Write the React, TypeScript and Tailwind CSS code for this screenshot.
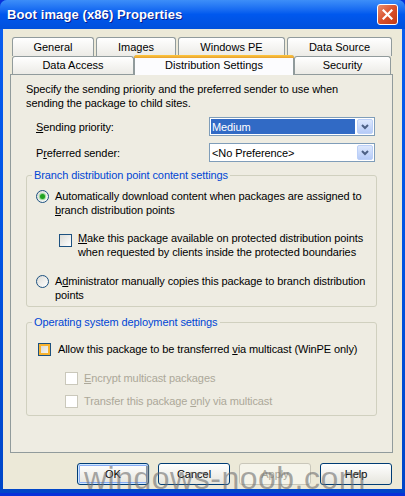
import React from 'react';

const font = "font-['Tahoma','Liberation_Sans',sans-serif]";

const Tab: React.FC<{ label: string; w: string }> = ({ label, w }) => (
  <div className={`${w} h-full flex items-center justify-center rounded-t-[3px] border border-b-0 border-[#919b9c] bg-gradient-to-b from-white to-[#ecebe6] text-[11px] text-black`}>
    {label}
  </div>
);

const Combo: React.FC<{ value: string; selected?: boolean }> = ({ value, selected }) => (
  <div className="w-[166px] h-[19px] border border-[#7f9db9] bg-white flex items-center p-[1px]">
    <div className={`flex-1 h-full flex items-center px-[1px] text-[11px] ${selected ? 'bg-[#316ac5] text-white' : 'text-black'}`}>{value}</div>
    <div className="w-[16px] h-full ml-[2px] rounded-[2px] border border-[#bcd0f8] bg-gradient-to-b from-[#dde8fd] to-[#b6cbf7] flex items-center justify-center">
      <svg width="8" height="6" viewBox="0 0 8 6"><path d="M1 1 L4 4 L7 1" fill="none" stroke="#4d6185" strokeWidth="2" /></svg>
    </div>
  </div>
);

const Radio: React.FC<{ checked?: boolean }> = ({ checked }) => (
  <div className="w-[13px] h-[13px] rounded-full border border-[#1c5180] bg-gradient-to-br from-[#dcdcd7] to-white flex items-center justify-center shrink-0">
    {checked && <div className="w-[5px] h-[5px] rounded-full bg-[#21a121] shadow-[0_0_1px_1px_rgba(80,200,80,0.6)]" />}
  </div>
);

const Check: React.FC<{ state?: 'normal' | 'hot' | 'disabled' }> = ({ state = 'normal' }) => {
  if (state === 'disabled') return <div className="w-[13px] h-[13px] border border-[#cac8bb] bg-white shrink-0" />;
  if (state === 'hot')
    return (
      <div className="w-[13px] h-[13px] border border-[#1c5180] bg-[#f8b330] p-[2px] shrink-0">
        <div className="w-full h-full bg-gradient-to-br from-[#dcdcd7] to-[#f5f4ef]" />
      </div>
    );
  return <div className="w-[13px] h-[13px] border border-[#1c5180] bg-gradient-to-br from-[#dcdcd7] to-white shrink-0" />;
};

const Button: React.FC<{ label: string; isDefault?: boolean; disabled?: boolean }> = ({ label, isDefault, disabled }) => (
  <div
    className={`w-[72px] h-[22px] rounded-[3px] border flex items-center justify-center text-[11px] ${
      disabled
        ? 'border-[#c9c7ba] bg-[#f5f4ea] text-[#aca899]'
        : 'border-[#003c74] bg-gradient-to-b from-white to-[#e6e5dd] text-black'
    } ${isDefault ? 'shadow-[inset_0_0_0_1px_#cee7ff,inset_0_0_0_2px_#89adf5]' : ''}`}
  >
    {label}
  </div>
);

const GroupBox: React.FC<{ title: string; h: string; children: React.ReactNode }> = ({ title, h, children }) => (
  <div className={`relative mx-[15px] ${h} rounded-[3px] border border-[#d0d0bf]`}>
    <span className="absolute -top-[8px] left-[5px] px-[2px] bg-[#eeece2] text-[11px] text-[#0046d5] leading-[14px]">{title}</span>
    {children}
  </div>
);

export default function App() {
  return (
    <div className={`${font} relative w-[405px] h-[496px] overflow-hidden bg-[#0831d9] select-none`}>
      <div className="w-[405px] h-[493px] rounded-t-[7px] bg-gradient-to-b from-[#0a5ef0] via-[#0054e3] to-[#0046c8] flex flex-col px-[3px] pb-[4px]">
        {/* title bar */}
        <div className="h-[29px] shrink-0 flex items-center justify-between bg-gradient-to-b from-[#3d8ef8] via-[#0058ee] to-[#0050dc] -mx-[3px] px-[7px] rounded-t-[7px]">
          <span className="font-['Trebuchet_MS','Liberation_Sans',sans-serif] font-bold text-[13px] text-white [text-shadow:1px_1px_0_#0a1e8a] tracking-[0.1px]">
            Boot image (x86) Properties
          </span>
          <div className="w-[21px] h-[21px] rounded-[3px] border border-white bg-gradient-to-br from-[#e88d6e] via-[#d9502b] to-[#c23a12] flex items-center justify-center">
            <svg width="11" height="11" viewBox="0 0 11 11"><path d="M1.5 1.5 L9.5 9.5 M9.5 1.5 L1.5 9.5" stroke="white" strokeWidth="2.2" strokeLinecap="square" /></svg>
          </div>
        </div>

        {/* body */}
        <div className="flex-1 bg-[#ece9d8] flex flex-col px-[7px] pt-[8px]">
          <div className="relative h-[37px] pl-[2px]">
            <div className="h-[19px] flex gap-[2px]">
              <Tab label="General" w="w-[82px]" />
              <Tab label="Images" w="w-[80px]" />
              <Tab label="Windows PE" w="w-[107px]" />
              <Tab label="Data Source" w="w-[105px]" />
            </div>
            <div className="h-[18px] flex items-end">
              <Tab label="Data Access" w="w-[122px]" />
              <div className="relative z-10 w-[160px] h-[20px] -mb-[1px] rounded-t-[3px] border border-b-0 border-[#919b9c] bg-[#fcfcfe] flex flex-col">
                <div className="h-[3px] -mx-[1px] -mt-[1px] rounded-t-[3px] bg-gradient-to-b from-[#ffc83c] to-[#e6a030]" />
                <div className="flex-1 flex items-center justify-center text-[11px] text-black -mt-[2px]">Distribution Settings</div>
              </div>
              <Tab label="Security" w="w-[97px]" />
            </div>
          </div>

          {/* panel */}
          <div className="w-[383px] h-[379px] border border-[#919b9c] bg-[#eeece2] flex flex-col text-[11px] text-black leading-[14px] tracking-[-0.1px]">
            <p className="pl-[15px] pt-[7px] whitespace-nowrap">
              Specify the sending priority and the preferred sender to use when<br />sending the package to child sites.
            </p>
            <div className="mt-[7px] flex items-center justify-between pl-[25px] pr-[17px]">
              <span><u>S</u>ending priority:</span>
              <Combo value="Medium" selected />
            </div>
            <div className="mt-[7px] flex items-center justify-between pl-[25px] pr-[17px]">
              <span>P<u>r</u>eferred sender:</span>
              <Combo value="<No Preference>" />
            </div>

            <div className="mt-[13px]">
              <GroupBox title="Branch distribution point content settings" h="h-[132px]">
                <div className="flex flex-col pl-[9px] pt-[13px] whitespace-nowrap">
                  <div className="flex items-start gap-[6px]">
                    <div className="mt-[1px]"><Radio checked /></div>
                    <span>Automatically download content when packages are assigned to<br /><u>b</u>ranch distribution points</span>
                  </div>
                  <div className="flex items-start gap-[6px] mt-[14px] pl-[23px]">
                    <div className="mt-[3px]"><Check /></div>
                    <span><u>M</u>ake this package available on protected distribution points<br />when requested by clients inside the protected boundaries</span>
                  </div>
                  <div className="flex items-start gap-[6px] mt-[15px]">
                    <div className="mt-[1px]"><Radio /></div>
                    <span>A<u>d</u>ministrator manually copies this package to branch distribution<br />points</span>
                  </div>
                </div>
              </GroupBox>
            </div>

            <div className="mt-[15px]">
              <GroupBox title="Operating system deployment settings" h="h-[94px]">
                <div className="flex flex-col pl-[11px] pt-[19px]">
                  <div className="flex items-center gap-[7px]">
                    <Check state="hot" />
                    <span>Allow this package to be transferred <u>v</u>ia multicast (WinPE only)</span>
                  </div>
                  <div className="flex items-center gap-[6px] mt-[15px] pl-[27px] text-[#aca899]">
                    <Check state="disabled" />
                    <span><u>E</u>ncrypt multicast packages</span>
                  </div>
                  <div className="flex items-center gap-[6px] mt-[9px] pl-[27px] text-[#aca899]">
                    <Check state="disabled" />
                    <span>Transfer this package <u>o</u>nly via multicast</span>
                  </div>
                </div>
              </GroupBox>
            </div>
          </div>

          <div className="mt-[10px] flex justify-end gap-[9px] pr-[3px]">
            <Button label="OK" isDefault />
            <Button label="Cancel" />
            <Button label="Apply" disabled />
            <Button label="Help" />
          </div>
        </div>
      </div>
      <div className="absolute left-[84px] top-[462px] font-['Liberation_Sans',sans-serif] text-[32px] text-[#6e6e6e]/60 leading-none tracking-[0.5px] pointer-events-none">
        windows-noob.com
      </div>
    </div>
  );
}
